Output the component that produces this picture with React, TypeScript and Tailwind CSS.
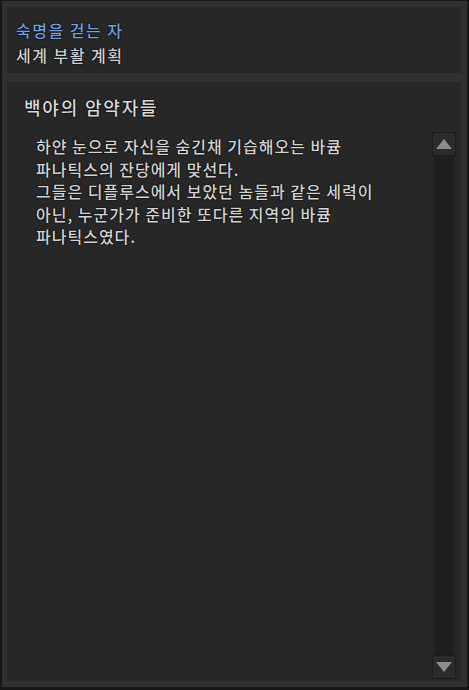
const lines = [
  '하얀 눈으로 자신을 숨긴채 기습해오는 바큠',
  '파나틱스의 잔당에게 맞선다.',
  '그들은 디플루스에서 보았던 놈들과 같은 세력이',
  '아닌, 누군가가 준비한 또다른 지역의 바큠',
  '파나틱스였다.',
];

const ScrollButton = ({ up }: { up?: boolean }) => {
  return (
    <div className="w-[24px] h-[24px] bg-[#2b2b2b] border border-[#1c1c1c] flex items-center justify-center">
      <svg width="16" height="10" viewBox="0 0 16 10">
        {up ? (
          <polygon points="8,0 16,10 0,10" fill="#8c8c8c" />
        ) : (
          <polygon points="0,0 16,0 8,10" fill="#8c8c8c" />
        )}
      </svg>
    </div>
  );
};

const App = () => {
  return (
    <div
      className="w-[469px] h-[690px] bg-[#171717] pt-px pl-[2px] pr-[2px] pb-[3px]"
      style={{ fontFamily: '"Noto Sans CJK KR", "Noto Sans", sans-serif' }}
    >
      <div className="w-full h-full bg-[#303030] pt-[6px] pl-[5px] pr-[6px] pb-[6px] flex flex-col gap-[9px]">
        {/* quest header */}
        <div className="h-[66px] bg-[#272727] pt-[11px] pl-[9px] text-[16px] font-medium leading-[25px] tracking-[1.5px] [text-shadow:0_0_1px_#000,0_0_2px_#000]">
          <p className="text-[#70a3e6]">숙명을 걷는 자</p>
          <p className="text-[#d2d2d2]">세계 부활 계획</p>
        </div>

        {/* quest body */}
        <div className="flex-1 bg-[#272727] flex flex-col">
          <h2 className="pt-[12px] pl-[17px] mb-[12px] text-[18px] font-medium leading-[26px] tracking-[1.8px] text-[#dadada] [text-shadow:0_0_1px_#000,0_0_2px_#000]">
            백야의 암약자들
          </h2>
          <div className="flex-1 flex">
            <div className="flex-1 pl-[29px] pt-[3px] text-[16px] font-medium leading-[22.5px] tracking-[1px] text-[#d4d4d4] [text-shadow:0_0_1px_#000,0_0_2px_#000]">
              {lines.map((line) => (
                <p key={line}>{line}</p>
              ))}
            </div>
            <div className="w-[24px] mr-[5px] mb-[2px] flex flex-col">
              <ScrollButton up />
              <div className="flex-1 mx-[2px] bg-[#1f1f1f]" />
              <ScrollButton />
            </div>
          </div>
        </div>
      </div>
    </div>
  );
};

export default App;
